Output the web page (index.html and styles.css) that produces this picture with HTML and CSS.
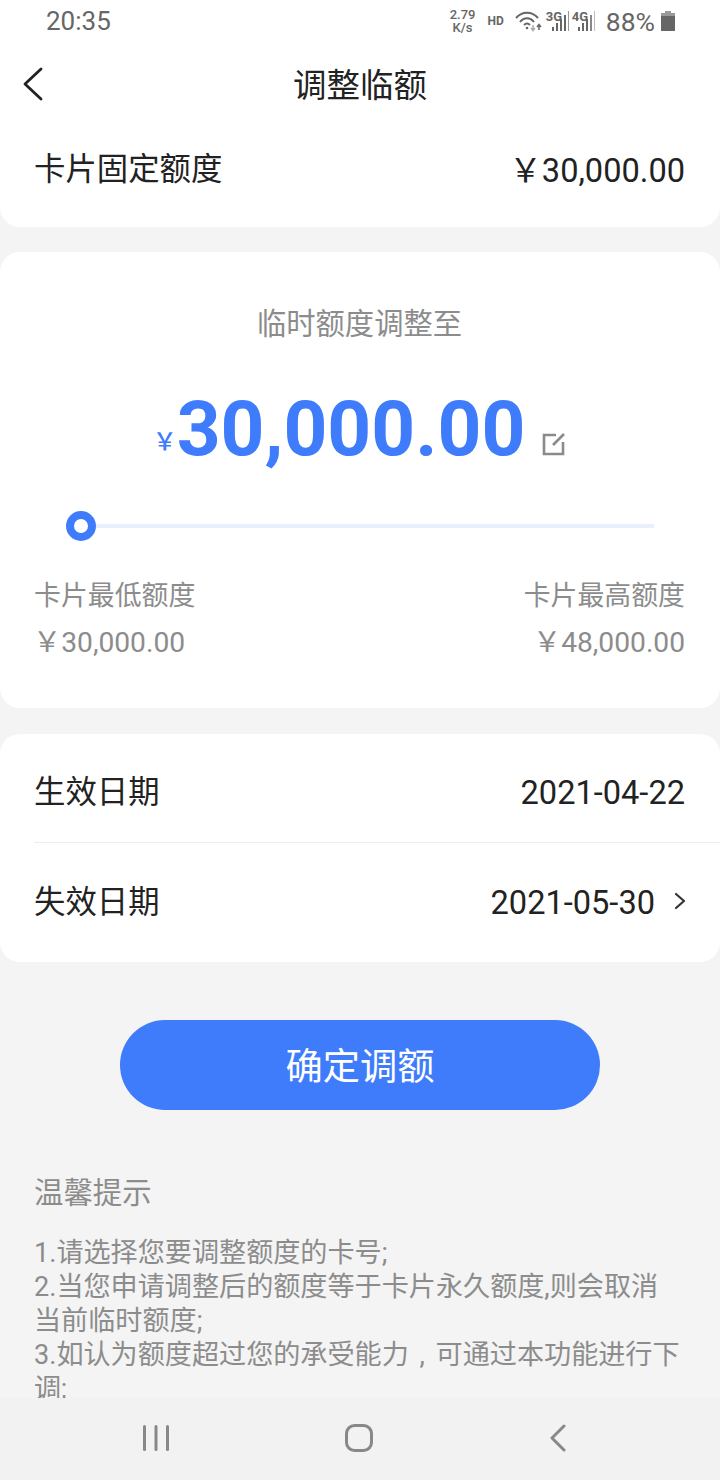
FILE: index.html
```html
<!DOCTYPE html>
<html lang="zh-CN">
<head>
  <meta charset="UTF-8">
  <title>调整临额</title>
  <link rel="stylesheet" href="styles.css">
</head>
<body>
  <div class="top">
    <div class="status">
      <span class="clock">20:35</span>
      <div class="status-right">
        <span class="speed">2.79<br>K/s</span>
        <span class="hd">HD</span>
        <svg class="wifi" width="28" height="22" viewBox="0 0 28 22" fill="none" stroke="#666" stroke-width="2">
          <path d="M1 8 C7 1 17 1 23 8"/>
          <path d="M5 12 C9 7 15 7 19 12"/>
          <path d="M9 15 C11 13 13 13 15 15"/>
          <circle cx="12" cy="18" r="1.3" fill="#666" stroke="none"/>
          <path d="M18 15 V20 M16 18 L18 20.500 L20 18" stroke="#aaa" stroke-width="1.500"/>
          <path d="M24 20 V15 M22 17 L24 14.500 L26 17" stroke-width="1.500"/>
        </svg>
        <div class="net">
          <span class="net-label">3G</span>
          <svg width="24" height="22" viewBox="0 0 24 22" fill="#666">
            <rect x="0" y="17" width="2" height="4"/><rect x="4" y="13" width="2" height="8"/>
            <rect x="8" y="9" width="2" height="12"/><rect x="12" y="5" width="2" height="16"/>
            <rect x="16" y="1" width="1" height="20" fill="#999"/>
          </svg>
        </div>
        <div class="net">
          <span class="net-label">4G</span>
          <svg width="24" height="22" viewBox="0 0 24 22" fill="#666">
            <rect x="0" y="17" width="2" height="4"/><rect x="4" y="13" width="2" height="8"/>
            <rect x="8" y="9" width="2" height="12"/><rect x="12" y="5" width="2" height="16" fill="#888"/>
            <rect x="16" y="1" width="1" height="20" fill="#bbb"/>
          </svg>
        </div>
        <span class="battery-text">88%</span>
        <svg width="14" height="20" viewBox="0 0 14 20" fill="#666">
          <rect x="4" y="0" width="6" height="2" fill="#999"/>
          <rect x="0" y="2" width="14" height="3" fill="#999"/>
          <rect x="0" y="5" width="14" height="15"/>
        </svg>
      </div>
    </div>
    <div class="nav">
      <svg class="back" width="22" height="34" viewBox="0 0 22 34" fill="none" stroke="#222" stroke-width="2.800" stroke-linecap="round" stroke-linejoin="round">
        <path d="M19 2 L3 17 L19 32"/>
      </svg>
      <h1>调整临额</h1>
    </div>
  </div>

  <section class="card card-fixed">
    <span>卡片固定额度</span>
    <span class="num"><span class="cny">￥</span>30,000.00</span>
  </section>

  <section class="card card-amount">
    <p class="amount-title">临时额度调整至</p>
    <div class="amount">
      <span class="yen">￥</span>
      <span class="amount-value">30,000.00</span>
      <svg class="edit" width="24" height="24" viewBox="0 0 24 24" fill="none" stroke="#8a8a8a" stroke-width="2.600">
        <path d="M14 3 H2 V22 H21 V10"/>
        <path d="M11 13 L22 2"/>
      </svg>
    </div>
    <div class="slider">
      <span class="thumb"></span>
      <span class="track"></span>
    </div>
    <div class="limits">
      <div>
        <p>卡片最低额度</p>
        <p class="limit-num"><span class="cny">￥</span>30,000.00</p>
      </div>
      <div class="limit-right">
        <p>卡片最高额度</p>
        <p class="limit-num"><span class="cny">￥</span>48,000.00</p>
      </div>
    </div>
  </section>

  <section class="card card-dates">
    <div class="row row-line">
      <span>生效日期</span>
      <span class="num">2021-04-22</span>
    </div>
    <div class="row">
      <span>失效日期</span>
      <span class="num with-arrow">2021-05-30
        <svg class="arrow" width="12" height="18" viewBox="0 0 12 18" fill="none" stroke="#333" stroke-width="2.200" stroke-linecap="round" stroke-linejoin="round">
          <path d="M2 2 L10 9 L2 16"/>
        </svg>
      </span>
    </div>
  </section>

  <button class="confirm" type="button">确定调额</button>

  <section class="tips">
    <h3>温馨提示</h3>
    <p>1.请选择您要调整额度的卡号;</p>
    <p>2.当您申请调整后的额度等于卡片永久额度,则会取消当前临时额度;</p>
    <p>3.如认为额度超过您的承受能力 , 可通过本功能进行下调;</p>
  </section>

  <div class="softkeys">
    <svg width="26" height="26" viewBox="0 0 26 26" fill="#888">
      <rect x="0" y="0" width="3" height="26" rx="1.500"/>
      <rect x="11.500" y="0" width="3" height="26" rx="1.500"/>
      <rect x="23" y="0" width="3" height="26" rx="1.500"/>
    </svg>
    <svg width="28" height="28" viewBox="0 0 28 28" fill="none" stroke="#888" stroke-width="3">
      <rect x="1.500" y="1.500" width="25" height="25" rx="8"/>
    </svg>
    <svg width="18" height="28" viewBox="0 0 18 28" fill="none" stroke="#888" stroke-width="3" stroke-linecap="round" stroke-linejoin="round">
      <path d="M15 2 L3 14 L15 26"/>
    </svg>
  </div>
</body>
</html>
```

FILE: styles.css
```css
* {
  box-sizing: border-box;
}

html, body {
  margin: 0;
  height: 1480px;
  overflow: hidden;
}

body {
  position: relative;
  width: 720px;
  background-color: #f4f4f4;
  color: #222;
  font-family: Roboto, "Noto Sans CJK SC", sans-serif;
}

p, h1, h3 {
  margin: 0;
  font-weight: 400;
}

.top {
  background: white;
}

.status {
  display: flex;
  justify-content: space-between;
  align-items: center;
  height: 42px;
  padding: 0 45px 0 46px;
  color: #666;
}

.clock {
  font-size: 26px;
}

.status-right {
  display: flex;
  align-items: center;
}

.speed {
  width: 28px;
  font-size: 13px;
  font-weight: 500;
  line-height: 13px;
  text-align: center;
}

.hd {
  margin-left: 11px;
  font-size: 12px;
  font-weight: 700;
}

.wifi {
  margin-left: 11px;
  margin-right: 3px;
}

.net {
  position: relative;
  width: 26px;
  height: 22px;
}

.net svg {
  position: absolute;
  left: 6px;
  top: 0;
}

.net-label {
  position: absolute;
  left: 0;
  top: -1px;
  font-size: 13px;
  font-weight: 700;
  line-height: 15px;
}

.battery-text {
  margin-left: 8px;
  font-size: 26.5px;
}

.status-right > svg:last-child {
  margin-left: 6px;
}

.nav {
  position: relative;
  height: 80px;
  text-align: center;
}

.back {
  position: absolute;
  left: 22px;
  top: 25px;
}

h1 {
  font-size: 33.5px;
  line-height: 88px;
}

.card {
  background: white;
}

.card-fixed {
  display: flex;
  justify-content: space-between;
  align-items: center;
  height: 105px;
  padding: 0 35px 10px 34px;
  border-radius: 0 0 20px 20px;
  font-size: 31.4px;
  line-height: 40px;
}

.num {
  font-size: 32.6px;
  line-height: 40px;
}

.cny {
  font-family: "Noto Sans CJK SC", sans-serif;
}

.card-amount {
  height: 456px;
  margin-top: 25px;
  padding: 52px 35px 0 34px;
  border-radius: 20px;
}

.amount-title {
  color: #8c8c8c;
  font-size: 29.3px;
  line-height: 40px;
  text-align: center;
}

.amount {
  display: flex;
  justify-content: center;
  align-items: flex-end;
  height: 90px;
  margin-top: 40px;
}

.yen {
  margin-bottom: 18px;
  color: #3f7cfb;
  font-family: "Noto Sans CJK SC", sans-serif;
  font-size: 24px;
  font-weight: 500;
  line-height: 32px;
}

.amount-value {
  color: #3f7cfb;
  font-size: 76.6px;
  font-weight: 700;
  line-height: 90px;
}

.edit {
  margin-left: 17px;
  margin-bottom: 18px;
}

.slider {
  display: flex;
  align-items: center;
  margin: 37px 31px 0 32px;
}

.thumb {
  width: 30px;
  height: 30px;
  border: 8px solid #3f7cfb;
  border-radius: 50%;
  background: white;
}

.track {
  flex: 1;
  height: 4px;
  background: #e8f0fd;
}

.limits {
  display: flex;
  justify-content: space-between;
  margin-top: 35px;
  color: #8c8c8c;
  font-size: 26.9px;
}

.limits p {
  line-height: 40px;
}

.limit-num {
  margin-top: 4px;
  margin-left: -1px;
  font-size: 28.2px;
}

.limit-right {
  text-align: right;
}

.card-dates {
  height: 228px;
  margin-top: 26px;
  padding-left: 34px;
  border-radius: 20px;
}

.row {
  display: flex;
  justify-content: space-between;
  align-items: center;
  height: 110px;
  padding: 9px 35px 0 0;
  font-size: 31.4px;
  line-height: 40px;
}

.row-line {
  height: 109px;
  border-bottom: 1px solid #eee;
}

.with-arrow {
  display: flex;
  align-items: center;
  gap: 19px;
}

.arrow {
  margin-top: -4px;
  margin-right: -1px;
}

.confirm {
  display: block;
  width: 480px;
  height: 90px;
  margin: 58px auto 0;
  padding: 0 0 2px;
  border: none;
  border-radius: 45px;
  background-color: #3f7cfb;
  color: white;
  font-family: inherit;
  font-size: 37.3px;
}

.tips {
  margin-top: 63px;
  padding: 0 38px 0 34px;
  color: #8c8c8c;
  font-size: 27.12px;
  line-height: 34px;
  word-spacing: 4px;
}

.tips h3 {
  margin-bottom: 23px;
  font-size: 29.4px;
  line-height: 40px;
}

.softkeys {
  position: absolute;
  left: 0;
  right: 0;
  bottom: 0;
  display: flex;
  justify-content: space-between;
  align-items: center;
  height: 82px;
  padding: 0 153px 2px 143px;
  background: #f2f2f2;
}
```
